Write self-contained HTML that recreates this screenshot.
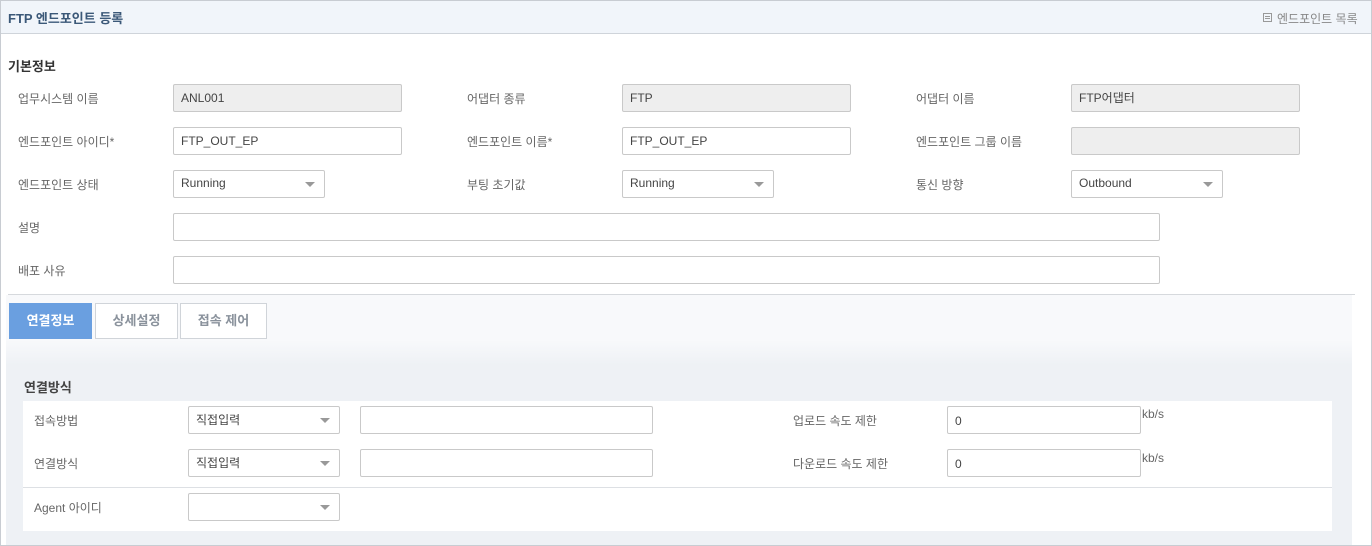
<!DOCTYPE html>
<html><head><meta charset="utf-8"><style>
*{box-sizing:border-box;margin:0;padding:0}
body{width:1372px;height:546px;background:#fff;font-family:"Liberation Sans","Noto Sans CJK KR",sans-serif;font-size:12px;color:#555;position:relative;overflow:hidden}
.a{position:absolute}
.frame{left:0;top:0;width:1372px;height:546px;border:1px solid #c8ccd2}
.hdr{left:1px;top:1px;width:1370px;height:33px;background:#f1f5fa;border-bottom:1px solid #cfd4da}
.lbl{font-size:12px;color:#666;margin-top:-1px}
.in{height:28px;border:1px solid #c9c9c9;border-radius:2px;background:#fff;padding-left:7px;line-height:26px;font-size:12px;color:#444}
.ro{background:#eee}
.sel::after{content:"";position:absolute;right:9px;top:11px;border-left:5px solid transparent;border-right:5px solid transparent;border-top:5px solid #999}
.tab{top:303px;height:36px;border:1px solid #d0d4d9;background:#fff;color:#8a929c;font-weight:bold;font-size:13px;text-align:center;line-height:34px}
</style></head><body>
<div class="a frame"></div>
<div class="a hdr"></div>
<div class="a" style="left:8px;top:8px;font-weight:bold;font-size:13px;color:#3b5878">FTP 엔드포인트 등록</div>
<div class="a" style="left:1263px;top:13px;width:9px;height:9px;border:1px solid #999"></div>
<div class="a" style="left:1265px;top:16px;width:5px;height:1px;background:#999"></div>
<div class="a" style="left:1265px;top:18px;width:5px;height:1px;background:#999"></div>
<div class="a lbl" style="left:1277px;top:11px;color:#888">엔드포인트 목록</div>
<div class="a" style="left:8px;top:56px;font-weight:bold;font-size:13px;color:#333">기본정보</div>

<div class="a lbl" style="left:18px;top:91px">업무시스템 이름</div>
<div class="a in ro" style="left:173px;top:84px;width:229px">ANL001</div>
<div class="a lbl" style="left:467px;top:91px">어댑터 종류</div>
<div class="a in ro" style="left:622px;top:84px;width:229px">FTP</div>
<div class="a lbl" style="left:916px;top:91px">어댑터 이름</div>
<div class="a in ro" style="left:1071px;top:84px;width:229px">FTP어댑터</div>

<div class="a lbl" style="left:18px;top:134px">엔드포인트 아이디*</div>
<div class="a in" style="left:173px;top:127px;width:229px">FTP_OUT_EP</div>
<div class="a lbl" style="left:467px;top:134px">엔드포인트 이름*</div>
<div class="a in" style="left:622px;top:127px;width:229px">FTP_OUT_EP</div>
<div class="a lbl" style="left:916px;top:134px">엔드포인트 그룹 이름</div>
<div class="a in ro" style="left:1071px;top:127px;width:229px"></div>

<div class="a lbl" style="left:18px;top:177px">엔드포인트 상태</div>
<div class="a in sel" style="left:173px;top:170px;width:152px;line-height:24px">Running</div>
<div class="a lbl" style="left:467px;top:177px">부팅 초기값</div>
<div class="a in sel" style="left:622px;top:170px;width:152px;line-height:24px">Running</div>
<div class="a lbl" style="left:916px;top:177px">통신 방향</div>
<div class="a in sel" style="left:1071px;top:170px;width:152px;line-height:24px">Outbound</div>

<div class="a lbl" style="left:18px;top:220px">설명</div>
<div class="a in" style="left:173px;top:213px;width:987px"></div>
<div class="a lbl" style="left:18px;top:263px">배포 사유</div>
<div class="a in" style="left:173px;top:256px;width:987px"></div>

<div class="a" style="left:8px;top:294px;width:1347px;height:1px;background:#d6d9dd"></div>
<div class="a" style="left:6px;top:295px;width:1346px;height:250px;background:linear-gradient(#f8f9fb 0,#f8f9fb 45px,#eef1f5 70px,#eef1f5 100%)"></div>
<div class="a tab" style="left:9px;width:83px;background:#6a9fe0;border-color:#6a9fe0;color:#fff">연결정보</div>
<div class="a tab" style="left:95px;width:83px">상세설정</div>
<div class="a tab" style="left:180px;width:87px">접속 제어</div>

<div class="a" style="left:24px;top:377px;font-weight:bold;font-size:13px;color:#444">연결방식</div>
<div class="a" style="left:23px;top:401px;width:1309px;height:130px;background:#fff"></div>
<div class="a" style="left:23px;top:487px;width:1309px;height:1px;background:#dde0e4"></div>

<div class="a lbl" style="left:34px;top:413px">접속방법</div>
<div class="a in sel" style="left:188px;top:406px;width:152px">직접입력</div>
<div class="a in" style="left:360px;top:406px;width:293px"></div>
<div class="a lbl" style="left:793px;top:413px">업로드 속도 제한</div>
<div class="a in" style="left:947px;top:406px;width:194px;line-height:28px">0</div>
<div class="a lbl" style="left:1142px;top:408px">kb/s</div>

<div class="a lbl" style="left:34px;top:456px">연결방식</div>
<div class="a in sel" style="left:188px;top:449px;width:152px">직접입력</div>
<div class="a in" style="left:360px;top:449px;width:293px"></div>
<div class="a lbl" style="left:793px;top:456px">다운로드 속도 제한</div>
<div class="a in" style="left:947px;top:449px;width:194px;line-height:28px">0</div>
<div class="a lbl" style="left:1142px;top:452px">kb/s</div>

<div class="a lbl" style="left:34px;top:500px">Agent 아이디</div>
<div class="a in sel" style="left:188px;top:493px;width:152px"></div>
</body></html>
